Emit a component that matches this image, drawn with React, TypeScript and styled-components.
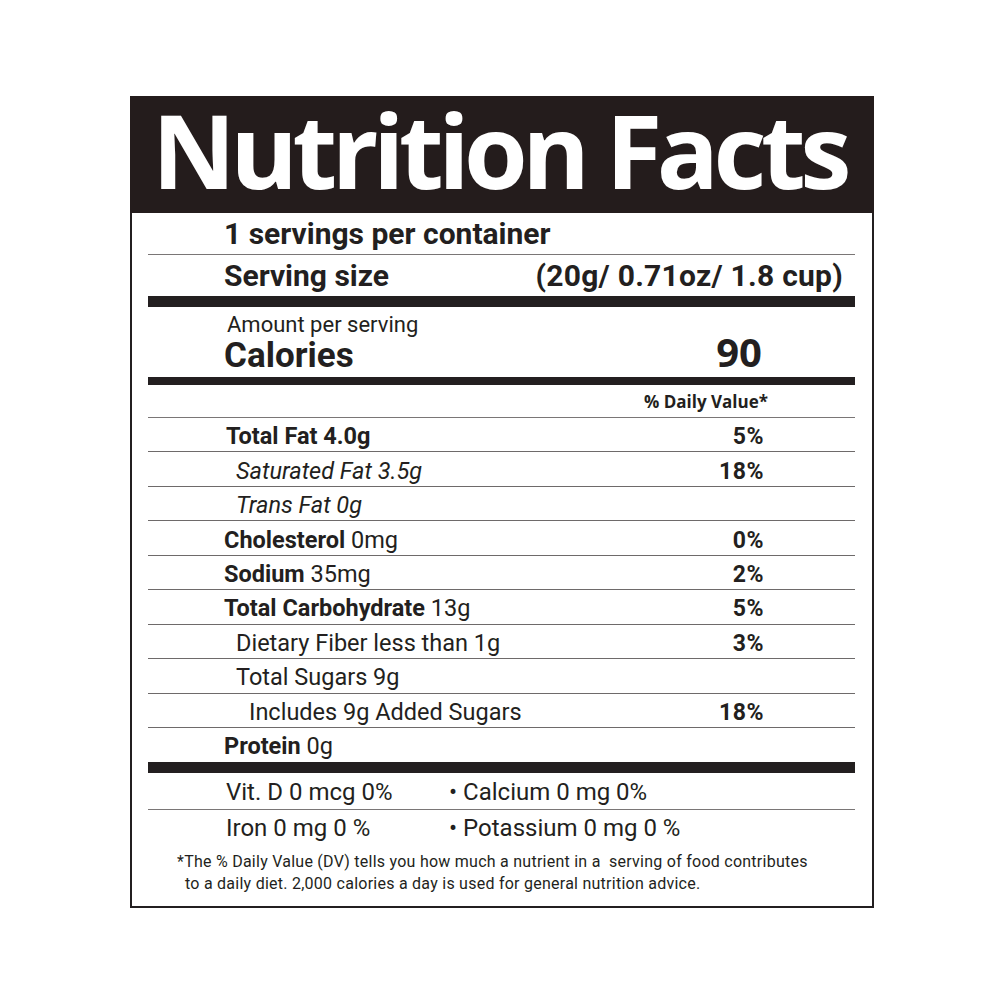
import React from "react";
import styled, { createGlobalStyle } from "styled-components";

const Global = createGlobalStyle`
  html, body { margin: 0; padding: 0; background: #ffffff; }
  body { font-family: Roboto, "Liberation Sans", sans-serif; color: #231f20; }
`;

const Page = styled.div`
  width: 1000px;
  height: 1000px;
  padding: 96px 0 0 130px;
  box-sizing: border-box;
`;

const Label = styled.div`
  width: 744px;
  box-sizing: border-box;
  border: 2px solid #231f20;
  border-top: none;
  background: #fff;
`;

const Header = styled.div`
  background: #241c1c;
  height: 117px;
  margin: 0 -2px;
  box-sizing: border-box;
  padding: 0 6px 10px 0;
  display: flex;
  justify-content: center;
  align-items: flex-start;
  color: #ffffff;
  font-family: "Open Sans", sans-serif;
  font-weight: 700;
  font-size: 103px;
  line-height: 107px;
  letter-spacing: -5.5px;
  white-space: nowrap;
`;

const Body = styled.div`
  padding: 0 17px 0 16px;
`;

const TopRow = styled.div<{ $line?: boolean }>`
  display: flex;
  justify-content: space-between;
  height: 41px;
  line-height: 41px;
  padding: 0 12px 0 76px;
  font-size: 30px;
  font-weight: 700;
  border-bottom: ${(p) => (p.$line ? "1px solid #7a7676" : "none")};
`;

const SizeValue = styled.span`
  letter-spacing: 0.25px;
`;

const Bar = styled.div<{ $h: number }>`
  height: ${(p) => p.$h}px;
  background: #231f20;
`;

const CalBlock = styled.div`
  height: 70px;
  padding: 4px 0 0 79px;
  box-sizing: border-box;
`;

const AmountText = styled.div`
  font-size: 22px;
  line-height: 27px;
  font-weight: 400;
`;

const CalRow = styled.div`
  display: flex;
  justify-content: space-between;
  align-items: baseline;
  margin-left: -3px;
  padding-right: 93px;
`;

const CalLabel = styled.span`
  font-size: 35px;
  font-weight: 700;
  line-height: 28px;
`;

const CalValue = styled.span`
  font-family: "Open Sans", sans-serif;
  font-size: 40px;
  font-weight: 700;
  line-height: 28px;
`;

const DVRow = styled.div`
  height: 33px;
  box-sizing: border-box;
  border-bottom: 1px solid #7a7676;
  text-align: right;
  padding-right: 87px;
  font-family: "Open Sans", sans-serif;
  font-weight: 700;
  font-size: 17px;
  line-height: 33px;
`;

const NRow = styled.div<{ $last?: boolean }>`
  display: flex;
  justify-content: space-between;
  align-items: center;
  height: ${(p) => (p.$last ? "34px" : "34.44px")};
  box-sizing: border-box;
  padding-top: 3px;
  border-bottom: ${(p) => (p.$last ? "none" : "1px solid #6e6a6a")};
  padding-right: 91px;
  font-size: 23.5px;
  line-height: 30px;
`;

const NLabel = styled.span<{ $indent: number; $italic?: boolean }>`
  padding-left: ${(p) => 76 + p.$indent}px;
  font-style: ${(p) => (p.$italic ? "italic" : "normal")};
  white-space: pre;
`;

const B = styled.b`
  font-weight: 700;
`;

const Pct = styled.span`
  font-weight: 700;
  font-size: 23px;
  letter-spacing: 0.5px;
  padding-top: 2px;
`;

const VitRow = styled.div<{ $line?: boolean; $h: number }>`
  display: grid;
  grid-template-columns: 223px 1fr;
  height: ${(p) => p.$h}px;
  box-sizing: border-box;
  border-bottom: ${(p) => (p.$line ? "1px solid #7a7676" : "none")};
  padding-left: 78px;
  font-size: 24px;
  line-height: ${(p) => p.$h + 2}px;
`;

const Foot = styled.div`
  padding: 6px 0 11px 29px;
  font-size: 16px;
  line-height: 22px;
  letter-spacing: 0.25px;
  white-space: pre;
`;

const FootLine = styled.div<{ $indent?: number }>`
  padding-left: ${(p) => p.$indent ?? 0}px;
`;

type Nut = { label: React.ReactNode; pct?: string; indent: number; italic?: boolean };

const nutrients: Nut[] = [
  { label: <B>Total Fat 4.0g</B>, pct: "5%", indent: 2 },
  { label: "Saturated Fat 3.5g", pct: "18%", indent: 12, italic: true },
  { label: "Trans Fat 0g", indent: 12, italic: true },
  { label: <><B>Cholesterol</B> 0mg</>, pct: "0%", indent: 0 },
  { label: <><B>Sodium</B> 35mg</>, pct: "2%", indent: 0 },
  { label: <><B>Total Carbohydrate</B> 13g</>, pct: "5%", indent: 0 },
  { label: "Dietary Fiber less than 1g", pct: "3%", indent: 12 },
  { label: "Total Sugars 9g", indent: 12 },
  { label: "Includes 9g Added Sugars", pct: "18%", indent: 25 },
  { label: <><B>Protein</B> 0g</>, indent: 0 },
];

export default function App() {
  return (
    <Page>
      <Global />
      <Label>
        <Header>Nutrition Facts</Header>
        <Body>
          <TopRow $line>
            <span>1 servings per container</span>
          </TopRow>
          <TopRow>
            <span>Serving size</span>
            <SizeValue>(20g/ 0.71oz/ 1.8 cup)</SizeValue>
          </TopRow>
          <Bar $h={11} />
          <CalBlock>
            <AmountText>Amount per serving</AmountText>
            <CalRow>
              <CalLabel>Calories</CalLabel>
              <CalValue>90</CalValue>
            </CalRow>
          </CalBlock>
          <Bar $h={8} />
          <DVRow>% Daily Value*</DVRow>
          {nutrients.map((n, i) => (
            <NRow key={i} $last={i === nutrients.length - 1}>
              <NLabel $indent={n.indent} $italic={n.italic}>{n.label}</NLabel>
              <Pct>{n.pct ?? ""}</Pct>
            </NRow>
          ))}
          <Bar $h={11} />
          <VitRow $line $h={37}>
            <span>Vit. D 0 mcg 0%</span>
            <span>• Calcium 0 mg 0%</span>
          </VitRow>
          <VitRow $h={35}>
            <span>Iron 0 mg 0 %</span>
            <span>• Potassium 0 mg 0 %</span>
          </VitRow>
          <Foot>
            <FootLine>*The % Daily Value (DV) tells you how much a nutrient in a  serving of food contributes</FootLine>
            <FootLine $indent={8}>to a daily diet. 2,000 calories a day is used for general nutrition advice.</FootLine>
          </Foot>
        </Body>
      </Label>
    </Page>
  );
}
